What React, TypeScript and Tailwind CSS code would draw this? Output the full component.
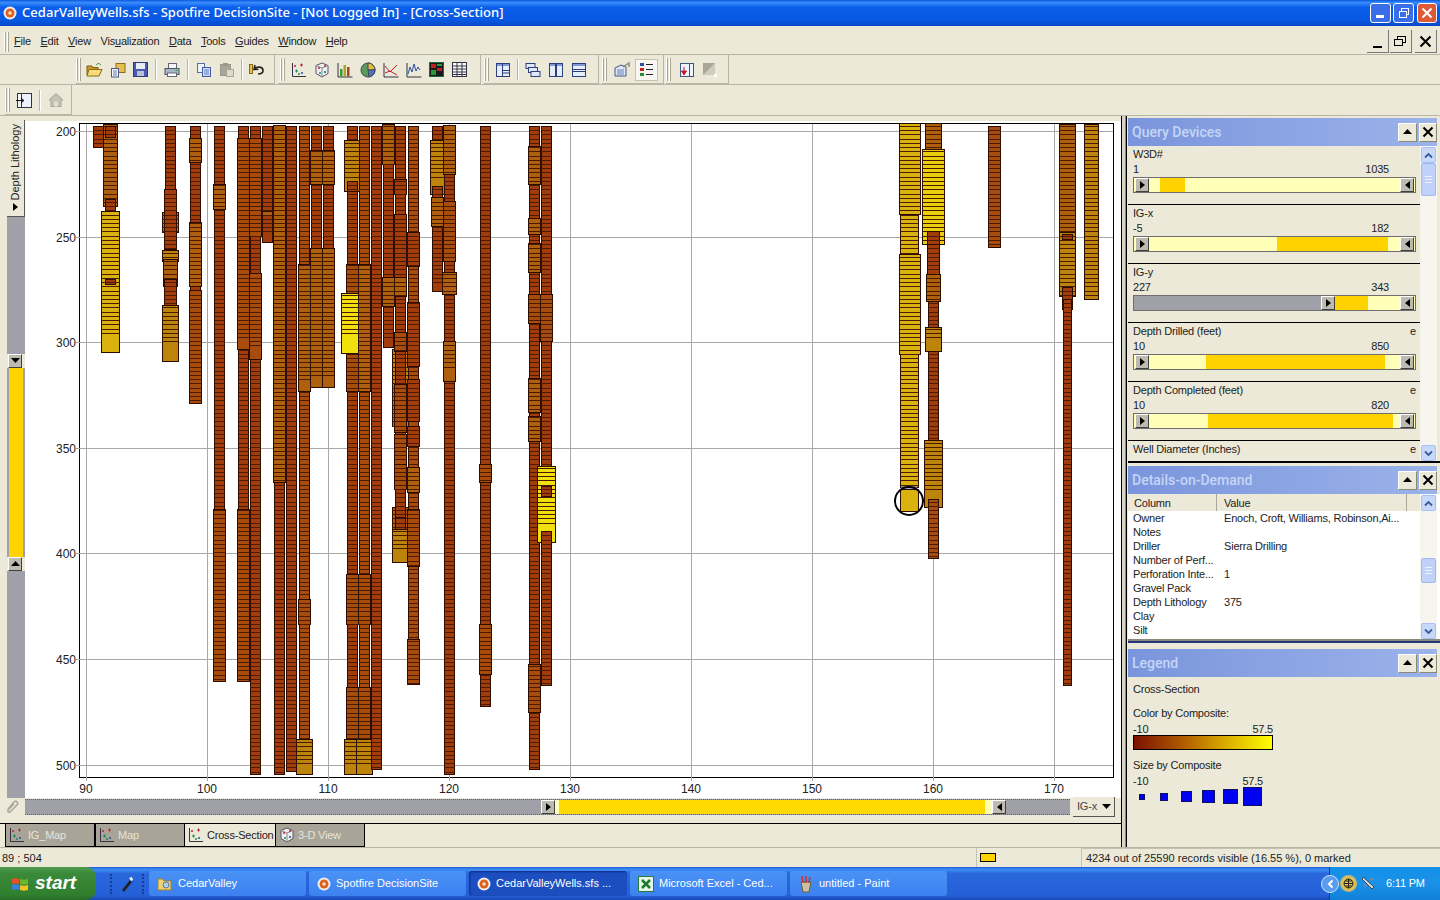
import React from 'react';

type Seg = [number, number, number, string, number?];
type Well = { x: number; segs: Seg[] };

const D = '#a23c0a';
const M = '#a84c0c';
const O = '#ae600e';
const G = '#bd840c';
const A = '#d9b20e';
const Y = '#f0e00e';

const wells: Well[] = [
  { x: 98, segs: [[127, 148, 10, D]] },
  { x: 110, segs: [[125, 207, 14, O], [127, 138, 10, D], [200, 212, 10, D], [212, 353, 18, A, 18], [280, 285, 10, D]] },
  { x: 170, segs: [[127, 190, 10, D], [213, 233, 16, G], [190, 250, 12, D], [251, 262, 16, G], [260, 287, 14, O], [280, 307, 12, D], [306, 362, 16, G, 18]] },
  { x: 195, segs: [[127, 404, 10, D], [139, 163, 12, O], [223, 287, 12, O], [291, 404, 12, M]] },
  { x: 219, segs: [[127, 682, 10, D], [185, 210, 12, O], [510, 682, 12, M]] },
  { x: 243, segs: [[127, 510, 10, D], [139, 350, 12, M, 10], [510, 682, 12, M]] },
  { x: 255, segs: [[127, 775, 10, D], [139, 237, 12, M], [274, 360, 12, M, 12]] },
  { x: 267, segs: [[127, 243, 10, D, 8], [212, 216, 10, O]] },
  { x: 279, segs: [[483, 775, 10, D], [126, 483, 12, O]] },
  { x: 291, segs: [[127, 772, 10, D]] },
  { x: 304, segs: [[127, 775, 10, M], [265, 392, 12, O, 8], [600, 625, 12, M], [740, 775, 16, G, 10]] },
  { x: 316, segs: [[127, 249, 10, D], [151, 185, 12, O], [249, 388, 12, O, 12]] },
  { x: 328, segs: [[127, 249, 10, D], [151, 185, 12, O], [249, 388, 12, O, 12]] },
  { x: 352, segs: [[127, 775, 10, D], [141, 192, 16, G, 14], [182, 192, 10, D], [265, 392, 12, M], [294, 354, 22, Y, 20], [575, 625, 12, M], [688, 775, 12, M], [740, 775, 16, G, 10]] },
  { x: 364, segs: [[127, 775, 10, M], [265, 392, 12, O], [575, 625, 12, M], [688, 775, 12, M], [740, 775, 16, G, 10]] },
  { x: 376, segs: [[127, 770, 10, D]] },
  { x: 388, segs: [[127, 348, 10, D, 8], [125, 165, 12, O], [278, 307, 12, O]] },
  { x: 400, segs: [[350, 427, 16, G], [508, 530, 16, O], [127, 563, 10, D], [180, 195, 12, D], [215, 278, 12, D], [278, 297, 12, O], [333, 352, 12, M], [385, 433, 12, M], [435, 465, 12, M], [465, 490, 12, M], [530, 563, 16, G, 12], [518, 530, 10, D]] },
  { x: 413, segs: [[127, 685, 10, M], [233, 267, 12, D], [303, 367, 12, D], [380, 422, 12, D], [427, 447, 12, D], [468, 493, 12, O], [510, 567, 12, M], [640, 685, 12, M]] },
  { x: 437, segs: [[127, 292, 10, D, 8], [141, 195, 14, G, 14], [187, 198, 10, D], [198, 227, 12, O]] },
  { x: 449, segs: [[127, 775, 10, D], [126, 175, 12, O], [202, 262, 12, M], [273, 295, 14, O], [342, 382, 12, O, 12]] },
  { x: 485, segs: [[127, 707, 10, D], [465, 483, 12, M], [625, 675, 12, M]] },
  { x: 534, segs: [[127, 770, 10, D], [147, 185, 12, O], [219, 235, 12, O], [244, 273, 12, O], [295, 324, 12, M], [379, 413, 12, O], [417, 442, 12, O], [665, 713, 12, M]] },
  { x: 546, segs: [[127, 686, 10, D], [295, 342, 12, M], [467, 543, 18, Y, 16], [487, 497, 10, D], [532, 686, 10, D]] },
  { x: 909, segs: [[124, 488, 18, A], [124, 215, 21, A], [255, 355, 21, A], [490, 512, 18, A, 22]] },
  { x: 933, segs: [[124, 559, 10, D], [124, 150, 16, O], [150, 245, 22, '#e8d00e'], [232, 245, 12, D], [245, 275, 12, D], [275, 302, 14, O], [328, 352, 16, G, 10], [441, 508, 18, G, 18], [500, 559, 10, M]] },
  { x: 994, segs: [[127, 248, 12, M]] },
  { x: 1067, segs: [[125, 235, 16, O], [233, 297, 16, G], [235, 240, 10, D], [288, 310, 10, D], [300, 686, 8, D]] },
  { x: 1091, segs: [[125, 300, 14, G]] },
];

const xTicks = [[90, 86], [100, 207], [110, 328], [120, 449], [130, 570], [140, 691], [150, 812], [160, 933], [170, 1054]];
const yTicks = [[200, 132], [250, 238], [300, 343], [350, 449], [400, 554], [450, 660], [500, 766]];

const stripes = (top: number, bottom: number) => {
  const out: number[] = [];
  for (let y = 127; y < bottom; y += 4.22) {
    if (y > top + 1) out.push(Math.round(y) + 0.5);
  }
  return out;
};

const Chart = () => (
  <svg width="1097" height="676" viewBox="25 122 1097 676" className="block bg-white shrink-0 tracking-normal">
    <rect x="79.5" y="124.5" width="1034" height="654" fill="#fff" stroke="#000" />
    {xTicks.map(([v, x]) => (
      <g key={v}>
        <line x1={x + 0.5} x2={x + 0.5} y1="125" y2="782" stroke="#a8a8a8" />
        <text x={x} y="794" textAnchor="middle" fontSize="12" fill="#222" fontFamily="Liberation Sans, sans-serif">{v}</text>
      </g>
    ))}
    {yTicks.map(([v, y]) => (
      <g key={v}>
        <line x1="76" x2="1113" y1={y + 0.5} y2={y + 0.5} stroke="#a8a8a8" />
        <text x="76" y={y + 5} textAnchor="end" fontSize="12" fill="#222" fontFamily="Liberation Sans, sans-serif">{v}</text>
      </g>
    ))}
    {wells.map((w) => (
      <g key={w.x}>
        {w.segs.map(([top, bottom, width, color, solid], i) => {
          const left = Math.round(w.x - width / 2) + 0.5;
          return (
            <g key={i}>
              <rect x={left} y={top + 0.5} width={width} height={bottom - top} fill={color} stroke="#2a0c00" />
              {stripes(top, bottom - (solid ?? 0)).map((y) => (
                <line key={y} x1={left} x2={left + width} y1={y} y2={y} stroke="#4a1a04" />
              ))}
            </g>
          );
        })}
      </g>
    ))}
    <line x1="901" x2="917" y1="488.5" y2="488.5" stroke="#6a70c8" strokeWidth="2" />
    <circle cx="909" cy="502" r="14" fill="none" stroke="#000" strokeWidth="2" />
    <rect x="1114" y="122" width="8" height="676" fill="#fff" />
  </svg>
);

const Tri = ({ dir }: { dir: 'r' | 'l' | 'd' | 'u' }) => {
  const pts = { r: '2,1 7,5 2,9', l: '7,1 2,5 7,9', d: '0,2 9,2 4.5,7', u: '0,7 9,7 4.5,2' }[dir];
  return (
    <svg width="9" height="10" viewBox="0 0 9 10">
      <polygon points={pts} fill="#000" />
    </svg>
  );
};

const Handle = ({ dir, className }: { dir: 'r' | 'l' | 'd' | 'u'; className?: string }) => (
  <div className={`w-[14px] h-[14px] shrink-0 bg-[#bdbab0] border-t border-l border-t-white border-l-white border-r border-b border-r-[#404040] border-b-[#404040] flex items-center justify-center ${className ?? ''}`}>
    <Tri dir={dir} />
  </div>
);

const Gripper = () => (
  <div className="w-[7px] h-full flex gap-[1px] py-[2px] shrink-0">
    <div className="w-[2px] border-l border-r border-l-white border-r-[#a9a696]" />
    <div className="w-[2px] border-l border-r border-l-white border-r-[#a9a696]" />
  </div>
);

const Sep = ({ w = 8 }: { w?: number }) => (
  <div style={{ width: w }} className="h-full flex justify-center items-center shrink-0">
    <div className="w-[2px] h-[21px] border-l border-r border-l-[#b9b6a6] border-r-white" />
  </div>
);

const Scatter = ({ size = 16 }: { size?: number }) => (
  <svg width={size} height={size} viewBox="0 0 16 16">
    <path d="M1.5 1v13.5H15" fill="none" stroke="#334" />
    <path d="M4 9h3M5.5 7.5v3" stroke="#1a8a5a" />
    <path d="M9 3h3M10.5 1.5v3" stroke="#c02030" />
    <path d="M3 4h2M4 3v2" stroke="#c02030" />
    <path d="M10 11h2M11 10v2" stroke="#2050b0" />
    <path d="M7 12h2M8 11v2" stroke="#1a8a5a" />
  </svg>
);

const Cube = ({ size = 16 }: { size?: number }) => (
  <svg width={size} height={size} viewBox="0 0 16 16">
    <path d="M8 1l6 2.5v8L8 15l-6-3.5v-8z" fill="#eef0ea" stroke="#556" />
    <path d="M2 3.5L8 6l6-2.5M8 6v9" fill="none" stroke="#889" />
    <path d="M4 6h2M5 5v2" stroke="#c02030" />
    <path d="M10 4h2M11 3v2" stroke="#c02030" />
    <path d="M5 11h2M6 10v2" stroke="#1a8a5a" />
    <path d="M10 10h2M11 9v2" stroke="#2050b0" />
  </svg>
);

const PaneIcon = ({ v }: { v: 'grid' | 'cols' | 'rows' | 'casc' }) => (
  <svg width="16" height="16" viewBox="0 0 16 16">
    {v === 'casc' ? (
      <g fill="#dfe8fb" stroke="#2c3f7c">
        <rect x="1" y="1.5" width="9" height="5" />
        <rect x="3.5" y="5.5" width="9" height="5" />
        <rect x="6" y="9.5" width="9" height="5" />
      </g>
    ) : (
      <g>
        <rect x="1.5" y="1.5" width="13" height="13" fill="#e6eefc" stroke="#2c3f7c" />
        <rect x="2" y="2" width="12" height="2" fill="#7e98d8" />
        {v === 'grid' && <path d="M7.5 2v12M8 8.5h6M8 11h6" stroke="#2c3f7c" />}
        {v === 'cols' && <path d="M7.5 2v12M8.5 2v12" stroke="#2c3f7c" />}
        {v === 'rows' && <path d="M2 7.5h12M2 9.5h12" stroke="#2c3f7c" />}
      </g>
    )}
  </svg>
);

const icons: Record<string, React.ReactNode> = {
  open: (
    <svg width="17" height="16" viewBox="0 0 17 16">
      <path d="M1 4h5l1 1.5h5V13H1z" fill="#c89a28" stroke="#7a5a10" />
      <path d="M3 7.5h13L13 14H1z" fill="#f8dc7c" stroke="#8a6a18" />
      <path d="M10 3c2-2 3-2 5 0" fill="none" stroke="#2a8a2a" />
    </svg>
  ),
  report: (
    <svg width="16" height="16" viewBox="0 0 16 16">
      <rect x="6" y="1.5" width="9" height="9" fill="#e8c050" stroke="#8a6a18" />
      <rect x="1.5" y="6.5" width="7" height="8.5" fill="#f4f6fb" stroke="#4a5a88" />
      <path d="M3 9h4M3 11h4M3 13h4" stroke="#6a7ab0" />
    </svg>
  ),
  save: (
    <svg width="15" height="15" viewBox="0 0 15 15">
      <rect x="0.5" y="0.5" width="14" height="14" fill="#4a5ab0" stroke="#2e3880" />
      <rect x="3" y="1" width="9" height="6" fill="#e8ecf8" />
      <rect x="4" y="9" width="7" height="5" fill="#b8c0d8" />
    </svg>
  ),
  print: (
    <svg width="16" height="16" viewBox="0 0 16 16">
      <rect x="4.5" y="1.5" width="8" height="5" fill="#f4f6fb" stroke="#667" />
      <rect x="1" y="6.5" width="14" height="6" fill="#a9b6c4" stroke="#4a5664" />
      <rect x="3.5" y="11" width="9" height="3.5" fill="#fff" stroke="#667" />
      <rect x="11.5" y="8" width="2" height="1" fill="#2a9a3a" />
    </svg>
  ),
  copy: (
    <svg width="16" height="16" viewBox="0 0 16 16">
      <rect x="1.5" y="1.5" width="7" height="9" fill="#eef2fb" stroke="#5570b0" />
      <rect x="6.5" y="5.5" width="8" height="9" fill="#cfdcf6" stroke="#3f5ca8" />
      <path d="M8 8h5M8 10h5M8 12h5" stroke="#6080c0" />
    </svg>
  ),
  paste: (
    <svg width="16" height="16" viewBox="0 0 16 16">
      <rect x="1.5" y="2.5" width="10" height="11" fill="#a8a698" stroke="#9a9888" />
      <rect x="4" y="1" width="5" height="3" fill="#9a9888" />
      <rect x="7.5" y="7.5" width="7" height="7" fill="#dddacb" stroke="#a8a698" />
    </svg>
  ),
  undo: (
    <svg width="16" height="16" viewBox="0 0 16 16">
      <rect x="0.5" y="2.5" width="3" height="9" fill="#e8c050" stroke="#8a6a18" />
      <path d="M6 3L5 7.5l4.5-.2M5.5 7C8 4 14 4.500 14 8.500c0 2.500-2 3.500-5 3.500" fill="none" stroke="#222" strokeWidth="1.600" />
    </svg>
  ),
  bar: (
    <svg width="16" height="16" viewBox="0 0 16 16">
      <path d="M1 1v14h14.500" fill="none" stroke="#334" />
      <rect x="3" y="7" width="2.500" height="7.500" fill="#3a9a3a" />
      <rect x="6.500" y="3" width="2.500" height="11.500" fill="#b8a030" />
      <rect x="10" y="5" width="2.500" height="9.500" fill="#a04a20" />
    </svg>
  ),
  pie: (
    <svg width="16" height="16" viewBox="0 0 16 16">
      <circle cx="8" cy="8" r="7" fill="#5a9a5a" stroke="#445" />
      <path d="M8 8V1a7 7 0 0 1 7 7z" fill="#e0c040" stroke="#445" />
      <path d="M8 8h7a7 7 0 0 1-6 7z" fill="#4a78c0" stroke="#445" />
    </svg>
  ),
  line: (
    <svg width="16" height="16" viewBox="0 0 16 16">
      <path d="M1 1v14h14.500" fill="none" stroke="#334" />
      <path d="M2 4l5 6 7-7" fill="none" stroke="#c02030" />
      <path d="M2 11l5-2 7 4" fill="none" stroke="#c02030" />
    </svg>
  ),
  profile: (
    <svg width="16" height="16" viewBox="0 0 16 16">
      <path d="M1 1v14h14.500" fill="none" stroke="#334" />
      <path d="M2 12l2-7 2 5 2-8 2 7 2-4 2 3" fill="none" stroke="#2a50a8" />
    </svg>
  ),
  heat: (
    <svg width="15" height="15" viewBox="0 0 15 15">
      <rect x="0.5" y="0.5" width="14" height="14" fill="#1a1a1a" stroke="#1a6a3a" />
      <rect x="2" y="2" width="5" height="4" fill="#c02020" />
      <rect x="8" y="2" width="5" height="2" fill="#2a9a3a" />
      <rect x="2" y="8" width="5" height="5" fill="#2a9a3a" />
      <rect x="8" y="6" width="5" height="3" fill="#c02020" />
    </svg>
  ),
  table: (
    <svg width="15" height="15" viewBox="0 0 15 15">
      <rect x="0.5" y="0.5" width="14" height="14" fill="#fff" stroke="#334" />
      <path d="M1 4h13M1 7h13M1 10h13M1 12.500h13M5 1v13M10 1v13" stroke="#334" />
    </svg>
  ),
  prefs: (
    <svg width="17" height="16" viewBox="0 0 17 16">
      <path d="M1 6l6-3 5 2v9H1z" fill="#dfe8fb" stroke="#44557c" />
      <path d="M3 8h7M3 10h7M3 12h7" stroke="#6a80b0" />
      <path d="M9 5l6-4v4" fill="none" stroke="#8a8a80" strokeWidth="1.500" />
    </svg>
  ),
  legend: (
    <svg width="15" height="15" viewBox="0 0 15 15">
      <rect x="1" y="1" width="4" height="3" fill="#2a50a8" />
      <rect x="1" y="6" width="4" height="3" fill="#c02020" />
      <rect x="1" y="11" width="4" height="3" fill="#2a8a3a" />
      <path d="M7 2.500h7M7 7.500h7M7 12.500h7" stroke="#223" />
    </svg>
  ),
  export: (
    <svg width="16" height="16" viewBox="0 0 16 16">
      <rect x="1.500" y="1.500" width="13" height="13" fill="#eef2fb" stroke="#44557c" />
      <path d="M10.500 2v12" stroke="#44557c" />
      <path d="M5 5v6M2.500 9L5 13l2.500-4z" fill="#c01828" stroke="#c01828" />
    </svg>
  ),
  resize: (
    <svg width="16" height="16" viewBox="0 0 16 16">
      <rect x="1" y="1" width="12" height="12" fill="#a8a698" />
      <path d="M1 13L13 1v12z" fill="#cfccbd" />
      <rect x="12" y="12" width="3" height="3" fill="#fff" />
    </svg>
  ),
  pane: (
    <svg width="16" height="15" viewBox="0 0 16 15">
      <rect x="1.500" y="0.500" width="14" height="14" fill="#eef2fb" stroke="#334" />
      <path d="M5.500 1v13" stroke="#334" />
      <path d="M0 7.500h7M5 5l3 2.500L5 10" fill="none" stroke="#111" />
    </svg>
  ),
  home: (
    <svg width="16" height="16" viewBox="0 0 16 16">
      <path d="M8 1.500L1 8h2v6.500h10V8h2z" fill="#c5c3b6" stroke="#a8a698" />
      <rect x="6.500" y="9.500" width="3" height="5" fill="#ece9d8" />
    </svg>
  ),
  scatter: <Scatter />,
  cube: <Cube />,
  p1: <PaneIcon v="grid" />,
  p2: <PaneIcon v="casc" />,
  p3: <PaneIcon v="cols" />,
  p4: <PaneIcon v="rows" />,
};

const Cell = ({ n, active }: { n: string; active?: boolean }) => (
  <div className={`w-[23px] h-[22px] shrink-0 flex items-center justify-center ${active ? 'bg-[#f7f6f0] border border-[#c5c2b2]' : ''}`}>{icons[n]}</div>
);

const Band = ({ children, className }: { children: React.ReactNode; className?: string }) => (
  <div className={`h-[29px] flex items-center border-r border-b border-r-[#b9b6a6] border-b-[#b9b6a6] pt-[1px] shrink-0 ${className ?? ''}`}>{children}</div>
);

const FilterBar = ({ gray = 0, from, to }: { gray?: number; from: number; to: number }) => (
  <div className="h-[16px] w-[283px] ml-[5px] flex items-center bg-[#ffffb8] border border-[#6e6e6e]">
    {gray > 0 && <div style={{ width: gray }} className="h-full bg-[#a0a0a8] shrink-0" />}
    <Handle dir="r" className={gray ? '' : 'ml-[1px]'} />
    <div className="flex-1 h-full relative">
      <div style={{ left: from, width: to - from }} className="absolute top-0 bottom-0 bg-[#ffd200]" />
    </div>
    <Handle dir="l" className="mr-[1px]" />
  </div>
);

const Filter = ({ name, lo, hi, e, from, to, gray }: { name: string; lo: string; hi: string; e?: boolean; from: number; to: number; gray?: number }) => (
  <div className="h-[59px] w-[292px] border-b border-black text-[11px] leading-[15px] text-[#222] pt-[1px] shrink-0">
    <div className="flex justify-between pl-[5px] pr-[4px]">
      <span>{name}</span>
      {e && <span>e</span>}
    </div>
    <div className="flex justify-between pl-[5px] pr-[31px]">
      <span>{lo}</span>
      <span>{hi}</span>
    </div>
    <FilterBar from={from} to={to} gray={gray} />
  </div>
);

const Chevron = ({ up }: { up?: boolean }) => (
  <svg width="9" height="7" viewBox="0 0 9 7">
    <path d={up ? 'M1 5.500l3.500-3.500L8 5.500' : 'M1 1.500L4.500 5 8 1.500'} fill="none" stroke="#3a5a9c" strokeWidth="1.800" />
  </svg>
);

const ScrollBtn = ({ up }: { up?: boolean }) => (
  <div className="h-[16px] w-[15px] rounded-[2px] bg-[#c8d8fb] border border-[#a8c0f0] flex items-center justify-center shrink-0">
    <Chevron up={up} />
  </div>
);

const Thumb = ({ h }: { h: number }) => (
  <div style={{ height: h }} className="w-[15px] rounded-[2px] bg-[#c0d2fa] border border-[#a0b8ee] flex items-center justify-center shrink-0">
    <div className="w-[7px] h-[7px] border-t border-b border-[#eef3ff] flex items-center">
      <div className="w-full h-[1px] bg-[#eef3ff]" />
    </div>
  </div>
);

const PanelHead = ({ title }: { title: string }) => (
  <div className="h-[28px] w-[309px] shrink-0 flex items-center bg-[linear-gradient(90deg,#7a95dc,#9bb3ea)] pl-[4px]">
    <span className="flex-1 text-[14px] leading-[14px] font-medium tracking-normal text-[#c6d5f6] font-['Roboto',sans-serif] -mt-[1px]">{title}</span>
    <div className="w-[19px] h-[19px] mr-[2px] bg-[#ece9d8] border-t border-l border-t-white border-l-white border-r border-b border-r-[#8a8878] border-b-[#8a8878] flex items-center justify-center"><Tri dir="u" /></div>
    <div className="w-[18px] h-[19px] bg-[#ece9d8] border-t border-l border-t-white border-l-white border-r border-b border-r-[#8a8878] border-b-[#8a8878] flex items-center justify-center">
      <svg width="12" height="12" viewBox="0 0 12 12"><path d="M1.500 1.500l9 9M10.500 1.500l-9 9" stroke="#000" strokeWidth="2" /></svg>
    </div>
  </div>
);

const details = [
  ['Owner', 'Enoch, Croft, Williams, Robinson,Ai...'],
  ['Notes', ''],
  ['Driller', 'Sierra Drilling'],
  ['Number of Perf...', ''],
  ['Perforation Inte...', '1'],
  ['Gravel Pack', ''],
  ['Depth Lithology', '375'],
  ['Clay', ''],
  ['Silt', ''],
];

const Tab = ({ label, icon, active }: { label: string; icon: React.ReactNode; active?: boolean }) => (
  <div className={`w-[90px] h-[23px] flex items-center gap-[3px] pl-[3px] text-[11px] shrink-0 border-black ${active ? 'bg-[#ece9d8] text-[#222] border-b' : 'bg-[#a8a498] text-[#e6e4da] border-l border-b border-r'}`}>
    {icon}
    <span className="whitespace-nowrap">{label}</span>
  </div>
);

const TaskBtn = ({ label, icon, active, w = 157 }: { label: string; icon: React.ReactNode; active?: boolean; w?: number }) => (
  <div style={{ width: w }} className={`h-[25px] mr-[3px] flex items-center gap-[5px] pl-[8px] rounded-[3px] text-[11px] tracking-normal text-white shrink-0 ${active ? 'bg-[#1c4ec0] shadow-[inset_1px_1px_2px_#0f2f80]' : 'bg-[linear-gradient(180deg,#4a92f5,#3c81f0)]'}`}>
    {icon}
    <span className="whitespace-nowrap">{label}</span>
  </div>
);

const Target = () => (
  <svg width="14" height="14" viewBox="0 0 14 14">
    <circle cx="7" cy="7" r="6.500" fill="#f0f0f0" />
    <circle cx="7" cy="7" r="4.500" fill="#e06020" />
    <circle cx="7" cy="7" r="1.800" fill="#f6e0b8" />
  </svg>
);

const sizes = [6, 8, 11, 13, 15, 19];

export default function App() {
  return (
    <div className="w-[1440px] h-[900px] overflow-hidden bg-[#ece9d8] flex flex-col tracking-[-0.2px] font-['Liberation_Sans',sans-serif]">
      {/* title bar */}
      <div className="h-[26px] shrink-0 flex items-center pl-[3px] pr-[3px] bg-[linear-gradient(180deg,#0a5ae0_0%,#3a8cfb_10%,#0a5fea_28%,#0857e0_80%,#0648c4_100%)]">
        <Target />
        <span className="ml-[5px] flex-1 text-[13px] text-white font-['Noto_Sans',sans-serif] font-medium tracking-[0.05px] whitespace-nowrap">CedarValleyWells.sfs - Spotfire DecisionSite - [Not Logged In] - [Cross-Section]</span>
        <div className="w-[21px] h-[20px] rounded-[3px] border border-white bg-[#3a6ee8] flex items-end pl-[5px] pb-[4px] mr-[2px]"><div className="w-[8px] h-[3px] bg-white" /></div>
        <div className="w-[21px] h-[20px] rounded-[3px] border border-white bg-[#3a6ee8] flex items-center justify-center mr-[3px]">
          <svg width="12" height="12" viewBox="0 0 12 12" fill="none" stroke="#fff"><rect x="3.500" y="1.500" width="7" height="6" /><rect x="1.500" y="4.500" width="7" height="6" fill="#3a6ee8" /></svg>
        </div>
        <div className="w-[20px] h-[20px] rounded-[3px] border border-white bg-[#dc5a36] flex items-center justify-center">
          <svg width="12" height="12" viewBox="0 0 12 12"><path d="M1.500 1.500l9 9M10.500 1.500l-9 9" stroke="#fff" strokeWidth="2" /></svg>
        </div>
      </div>
      {/* menu */}
      <div className="h-[29px] shrink-0 flex items-center border-b border-[#b9b6a6] pt-[3px] pr-[3px]">
        <div className="ml-[4px] h-[24px]"><Gripper /></div>
        <div className="flex ml-[3px] text-[11px] text-[#222] gap-[9.5px] flex-1">
          <span><u>F</u>ile</span>
          <span><u>E</u>dit</span>
          <span><u>V</u>iew</span>
          <span>Vis<u>u</u>alization</span>
          <span><u>D</u>ata</span>
          <span><u>T</u>ools</span>
          <span><u>G</u>uides</span>
          <span><u>W</u>indow</span>
          <span><u>H</u>elp</span>
        </div>
        <div className="w-[22px] h-[23px] border-r border-b border-r-[#777] border-b-[#777] flex items-end justify-center pb-[4px] mr-[1px]"><div className="w-[9px] h-[2px] bg-black" /></div>
        <div className="w-[22px] h-[23px] border-r border-b border-r-[#777] border-b-[#777] flex items-center justify-center mr-[3px]">
          <svg width="13" height="12" viewBox="0 0 13 12" fill="none" stroke="#000"><rect x="3.500" y="1.500" width="8" height="6" /><rect x="0.500" y="4.500" width="8" height="6" fill="#ece9d8" /></svg>
        </div>
        <div className="w-[22px] h-[23px] border-r border-b border-r-[#777] border-b-[#777] flex items-center justify-center">
          <svg width="13" height="13" viewBox="0 0 13 13"><path d="M1.500 1.500l10 10M11.500 1.500l-10 10" stroke="#000" strokeWidth="2" /></svg>
        </div>
      </div>
      {/* toolbars */}
      <div className="h-[30px] shrink-0 flex border-b border-[#b9b6a6] pl-[76px]">
        <Band className="w-[199px]">
          <Gripper />
          <Cell n="open" /><Cell n="report" /><Cell n="save" /><Sep />
          <Cell n="print" /><Sep w={9} />
          <Cell n="copy" /><Cell n="paste" /><Sep w={7} />
          <Cell n="undo" />
        </Band>
        <div className="w-[3px]" />
        <Band className="w-[203px]">
          <div className="w-[2px]" /><Gripper />
          <Cell n="scatter" /><Cell n="cube" /><Cell n="bar" /><Cell n="pie" /><Cell n="line" /><Cell n="profile" /><Cell n="heat" /><Cell n="table" />
        </Band>
        <div className="w-[3px]" />
        <Band className="w-[115px]">
          <Gripper />
          <Cell n="p1" /><Sep w={7} />
          <Cell n="p2" /><Cell n="p3" /><Cell n="p4" />
        </Band>
        <div className="w-[3px]" />
        <Band className="w-[62px]">
          <Gripper /><div className="w-[2px]" />
          <Cell n="prefs" /><div className="w-[1px]" /><Cell n="legend" active />
        </Band>
        <div className="w-[2px]" />
        <Band className="w-[63px]">
          <Gripper /><div className="w-[2px]" />
          <Cell n="export" /><Cell n="resize" />
        </Band>
      </div>
      <div className="h-[31px] shrink-0 flex border-b border-[#b9b6a6] pl-[5px]">
        <Band className="w-[67px] h-[30px]">
          <Gripper />
          <Cell n="pane" /><Sep w={9} />
          <Cell n="home" />
        </Band>
      </div>
      {/* main */}
      <div className="h-[731px] shrink-0 flex">
        <div className="w-[1122px] shrink-0 flex flex-col border-r border-black">
          <div className="h-[682px] flex pl-[7px] pt-[5px] shrink-0">
            <div className="w-[18px] flex flex-col shrink-0">
              <div className="h-[97px] -mt-[1px] shrink-0 bg-[#ece9d8] border-b border-r border-[#555] flex flex-col items-center justify-between py-[4px]">
                <span className="[writing-mode:vertical-rl] rotate-180 text-[11px] tracking-normal text-[#222] whitespace-nowrap">Depth Lithology</span>
                <Tri dir="r" />
              </div>
              <div className="h-[137px] bg-[#a0a0a8] shrink-0" />
              <Handle dir="d" className="ml-[1px]" />
              <div className="h-[189px] bg-[#ffd200] shrink-0 border-x-[2px] border-[#a0a0a8]" />
              <Handle dir="u" className="ml-[1px]" />
              <div className="flex-1 bg-[#a0a0a8]" />
            </div>
            <div className="flex-1 bg-white overflow-hidden">
              <Chart />
            </div>
          </div>
          <div className="h-[17px] shrink-0 flex items-center">
            <div className="w-[25px] flex justify-center shrink-0">
              <svg width="16" height="16" viewBox="0 0 16 16" fill="none" stroke="#a8a698" strokeWidth="1.500"><path d="M3 10l6-7c2-2 5 1 3 3l-7 7c-1 1-3-1-2-2l6-6" /></svg>
            </div>
            <div className="w-[1045px] h-[16px] bg-[#a0a0a8] border-y border-dotted border-[#666] flex items-center pl-[516px] shrink-0">
              <Handle dir="r" />
              <div className="w-[4px] h-full bg-[#ffffb8]" />
              <div className="w-[426px] h-full bg-[#ffd900]" />
              <div className="w-[7px] h-full bg-[#ffffb8]" />
              <Handle dir="l" />
            </div>
            <div className="ml-[3px] w-[42px] h-[20px] bg-[#ece9d8] border-r border-b border-[#555] flex items-center justify-between pl-[4px] pr-[3px] pt-[1px] text-[11px] text-[#444] shrink-0">
              <span>IG-x</span><Tri dir="d" />
            </div>
          </div>
          <div className="flex-1 border-b border-black" />
          <div className="h-[23px] shrink-0 flex pl-[5px] bg-[#ece9d8]">
            <Tab label="IG_Map" icon={<Scatter />} />
            <Tab label="Map" icon={<Scatter />} />
            <Tab label="Cross-Section" icon={<Scatter />} active />
            <Tab label="3-D View" icon={<Cube />} />
          </div>
        </div>
        <div className="w-[4px] bg-[#d8d5c5] border-r border-[#888] shrink-0" />
        <div className="flex-1 border-l border-black flex flex-col pt-[2px] pl-[1px]">
          <PanelHead title="Query Devices" />
          <div className="h-[315px] shrink-0 flex">
            <div className="w-[292px] shrink-0 overflow-hidden">
              <Filter name="W3D#" lo="1" hi="1035" from={11} to={36} />
              <Filter name="IG-x" lo="-5" hi="182" from={128} to={239} />
              <Filter name="IG-y" lo="227" hi="343" from={0} to={33} gray={187} />
              <Filter name="Depth Drilled (feet)" lo="10" hi="850" e from={57} to={236} />
              <Filter name="Depth Completed (feet)" lo="10" hi="820" e from={59} to={244} />
              <div className="text-[11px] leading-[15px] flex justify-between pl-[5px] pr-[4px] pt-[1px] text-[#222]"><span>Well Diameter (Inches)</span><span>e</span></div>
            </div>
            <div className="w-[17px] bg-[#f6f5ee] flex flex-col pt-[1px] px-[1px] shrink-0">
              <ScrollBtn up />
              <Thumb h={33} />
              <div className="flex-1" />
              <ScrollBtn />
            </div>
          </div>
          <div className="h-[2px] bg-black shrink-0" />
          <div className="h-[3px] shrink-0" />
          <PanelHead title="Details-on-Demand" />
          <div className="h-[147px] shrink-0 flex bg-white border-b-2 border-[#8a8878] overflow-hidden">
            <div className="w-[292px] shrink-0 text-[11px] text-[#222]">
              <div className="h-[17px] flex bg-[#ece9d8] leading-[19px]">
                <div className="w-[89px] pl-[6px] border-r border-[#aca899]">Column</div>
                <div className="w-[190px] pl-[7px] border-r border-[#aca899]">Value</div>
              </div>
              {details.map(([k, v]) => (
                <div key={k} className="h-[14px] leading-[14px] flex pl-[5px] whitespace-nowrap">
                  <span className="w-[91px] shrink-0">{k}</span>
                  <span>{v}</span>
                </div>
              ))}
            </div>
            <div className="w-[17px] bg-[#f6f5ee] flex flex-col pt-[1px] px-[1px] shrink-0">
              <ScrollBtn up />
              <div className="h-[47px] shrink-0" />
              <Thumb h={25} />
              <div className="flex-1" />
              <ScrollBtn />
            </div>
          </div>
          <div className="h-[8px] shrink-0 border-t-2 border-[#24367c]" />
          <PanelHead title="Legend" />
          <div className="flex-1 text-[11px] leading-[14px] text-[#222] pl-[5px] pt-[5px]">
            <div>Cross-Section</div>
            <div className="mt-[10px]">Color by Composite:</div>
            <div className="w-[140px] flex justify-between mt-[2px]"><span>-10</span><span>57.5</span></div>
            <div className="w-[140px] h-[15px] -mt-[1px] border border-black bg-[linear-gradient(90deg,#7a1200,#b05a00_35%,#d9a800_65%,#ffff00)]" />
            <div className="mt-[8px]">Size by Composite</div>
            <div className="w-[130px] flex justify-between mt-[2px]"><span>-10</span><span>57.5</span></div>
            <div className="flex items-center w-[140px] h-[19px] -mt-[1px] -ml-[2px]">
              {sizes.map((s) => (
                <div key={s} className="w-[22px] flex justify-center shrink-0">
                  <div style={{ width: s, height: s }} className="bg-[#0000f0] border border-[#101060] shrink-0" />
                </div>
              ))}
            </div>
          </div>
        </div>
      </div>
      {/* status */}
      <div className="h-[20px] shrink-0 border-t border-[#b9b6a6] flex items-center text-[11px] tracking-normal text-[#222]">
        <span className="pl-[2px] pt-[1px] w-[976px] shrink-0">89 ; 504</span>
        <div className="w-[105px] h-full border-l border-[#c5c2b2] pl-[3px] flex items-center shrink-0">
          <div className="w-[16px] h-[9px] bg-[#ffd200] border border-black" />
        </div>
        <div className="flex-1 h-full border-l border-t border-[#c5c2b2] pl-[4px] leading-[19px]">4234 out of 25590 records visible (16.55 %), 0 marked</div>
      </div>
      {/* taskbar */}
      <div className="h-[33px] shrink-0 flex items-center bg-[linear-gradient(180deg,#1f5fd8_0%,#3d8cf5_8%,#2a66dc_20%,#2560d8_85%,#1a48b8_100%)]">
        <div className="w-[96px] h-full rounded-r-[10px] bg-[linear-gradient(180deg,#4f9a4f,#3a8a3a_20%,#2f7f2f_85%,#276a27)] flex items-center pl-[11px] gap-[6px] shrink-0">
          <svg width="18" height="18" viewBox="0 0 18 18">
            <path d="M1 4c2-1 4-1 7 0v5C5 8 3 8 1 9z" fill="#e8502a" />
            <path d="M9 4c3 1 5 1 8 0v5c-3 1-5 1-8 0z" fill="#6ab82e" />
            <path d="M1 10c2-1 4-1 7 0v5c-3-1-5-1-7 0z" fill="#3a80e0" />
            <path d="M9 10c3 1 5 1 8 0v5c-3 1-5 1-8 0z" fill="#f0c420" />
          </svg>
          <span className="text-[19px] font-bold italic tracking-normal text-white">start</span>
        </div>
        <div className="w-[53px] shrink-0 flex items-center justify-center gap-[8px] pl-[8px]">
          <div className="w-[2px] h-[20px] border-l-2 border-dotted border-[#123a9a]" />
          <svg width="14" height="16" viewBox="0 0 14 16"><path d="M2 14l8-10 2 2-8 10z" fill="#222" /><path d="M9 2l3-1 1 3-2 1z" fill="#f0f0f0" /></svg>
          <div className="w-[2px] h-[20px] border-l-2 border-dotted border-[#123a9a]" />
        </div>
        <TaskBtn label="CedarValley" icon={
          <svg width="16" height="16" viewBox="0 0 16 16"><path d="M1 3h5l1 2h7v9H1z" fill="#f0d070" stroke="#a08030" /><circle cx="9" cy="9" r="3" fill="#a8d0f0" stroke="#5a7a9a" /></svg>
        } />
        <TaskBtn label="Spotfire DecisionSite" icon={<Target />} />
        <TaskBtn label="CedarValleyWells.sfs ..." icon={<Target />} active w={158} />
        <TaskBtn label="Microsoft Excel - Ced..." icon={
          <svg width="16" height="16" viewBox="0 0 16 16"><rect x="0.500" y="0.500" width="15" height="15" fill="#e8f4e8" stroke="#2a7a3a" /><path d="M4 4l8 8M12 4l-8 8" stroke="#1a7a2a" strokeWidth="2.500" /></svg>
        } />
        <TaskBtn label="untitled - Paint" icon={
          <svg width="16" height="18" viewBox="0 0 16 18"><path d="M3 7h10l-2 10H5z" fill="#c8c0a0" stroke="#6a6040" /><path d="M5 8L4 1M8 8V1M11 8l1-6" stroke="#d03030" strokeWidth="1.500" /></svg>
        } />
        <div className="flex-1" />
        <div className="w-[111px] h-full shrink-0 flex items-center bg-[linear-gradient(180deg,#1490e8,#1a92e8_50%,#0f7fd8)] border-l border-[#0f3f9f]">
          <div className="w-[18px] h-[18px] -ml-[9px] rounded-full bg-[#5a9cf0] border border-[#cfe2ff] flex items-center justify-center shrink-0">
            <svg width="9" height="10" viewBox="0 0 9 10"><path d="M6.500 1.500L3 5l3.500 3.500" fill="none" stroke="#fff" strokeWidth="2" /></svg>
          </div>
          <div className="ml-[1px] w-[17px] h-[17px] rounded-full bg-[#e8c840] border-2 border-[#c8b878] flex items-center justify-center shrink-0">
            <svg width="11" height="11" viewBox="0 0 11 11" fill="none" stroke="#222"><circle cx="5.500" cy="5.500" r="4.500" /><path d="M1 5.500h9M5.500 1v9M2 3h7M2 8h7" /></svg>
          </div>
          <svg className="ml-[4px] shrink-0" width="16" height="18" viewBox="0 0 16 18"><path d="M2 2l11 10-2 2L1 4z" fill="#d8dce0" stroke="#444" /><path d="M3 9l3 1-2 3zM9 3l1 3 3-2z" fill="#889" /></svg>
          <span className="ml-[9px] text-[11px] text-white whitespace-nowrap">6:11 PM</span>
        </div>
      </div>
    </div>
  );
}
